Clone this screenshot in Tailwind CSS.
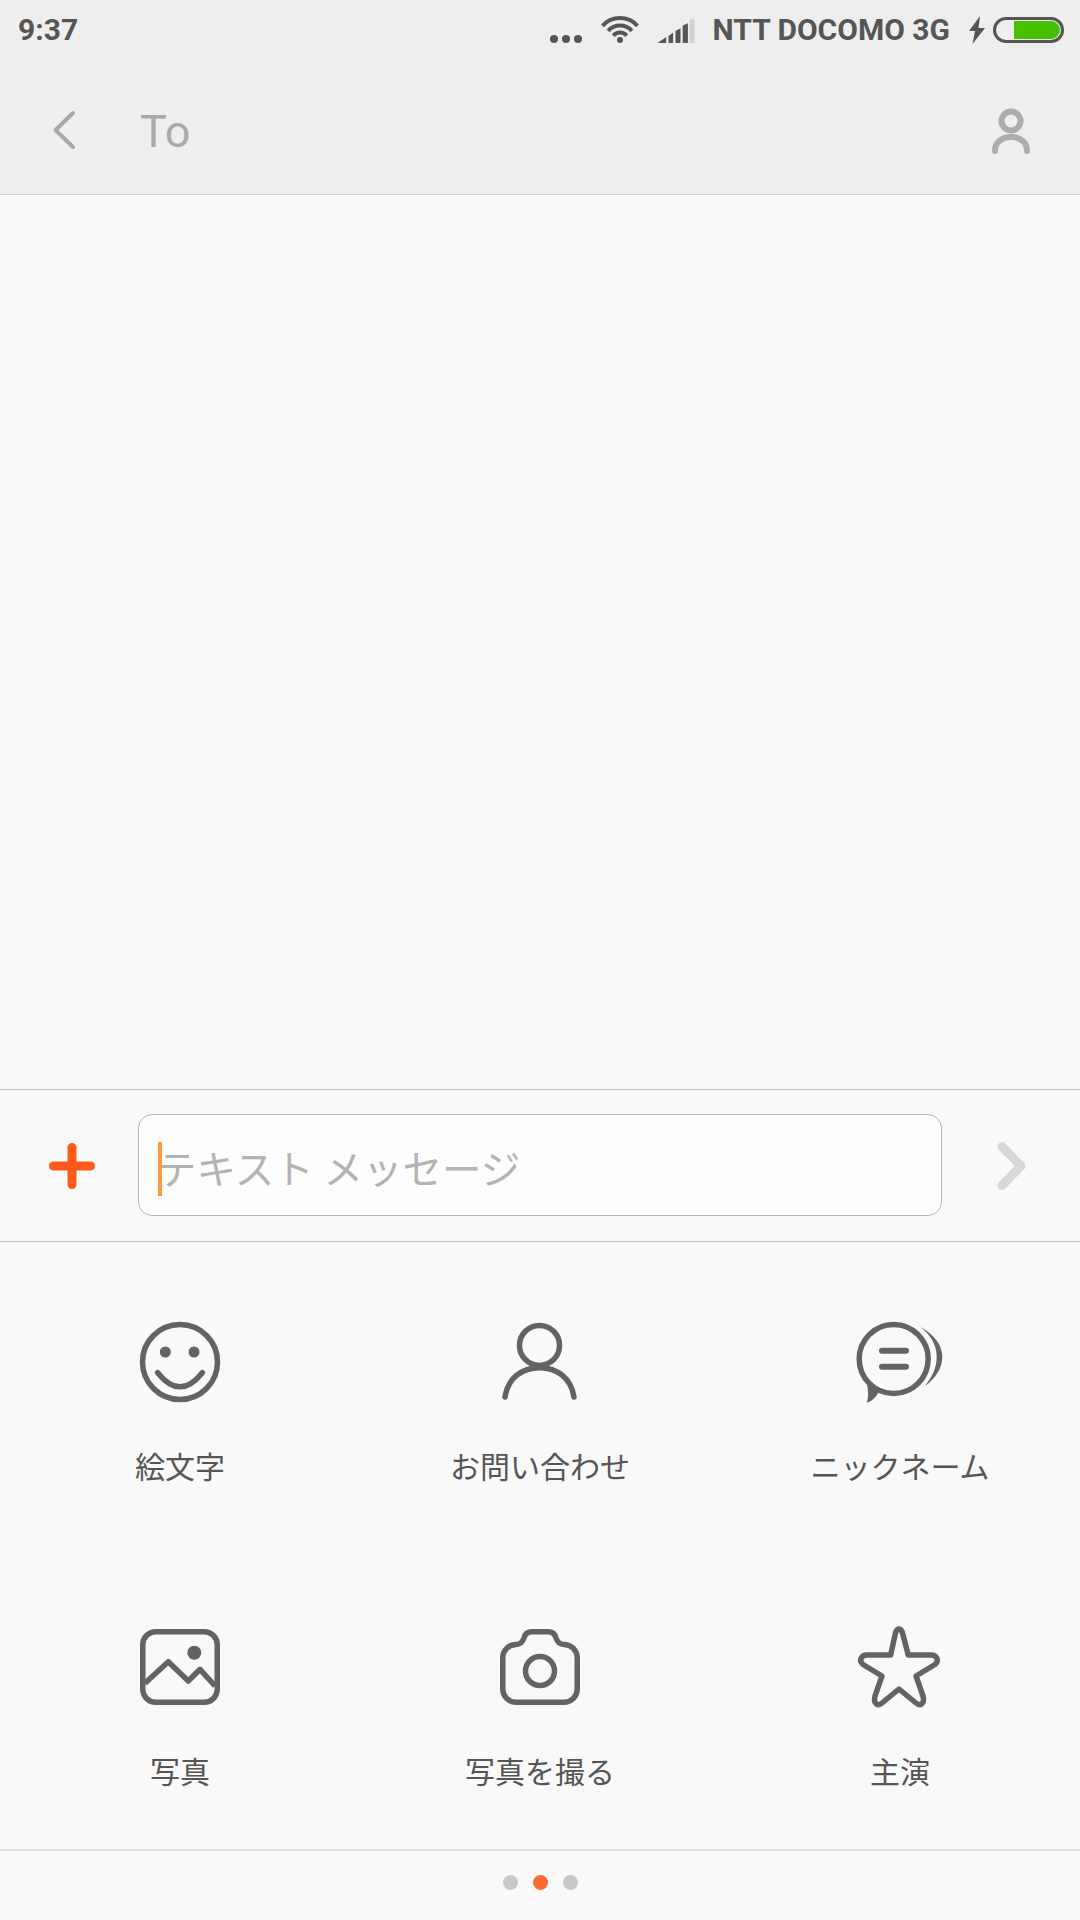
<!DOCTYPE html>
<html lang="ja">
<head>
  <meta charset="UTF-8" />
  <meta name="viewport" content="width=device-width, initial-scale=1.0" />
  <title>To</title>
  <script src="https://cdn.jsdelivr.net/npm/@tailwindcss/browser@4"></script>
</head>
<body class="bg-[#f9f9f9] font-['Roboto','Noto_Sans_CJK_JP',sans-serif]">
  <div class="flex flex-col w-[1080px] h-[1920px] overflow-hidden">
    <!-- Header -->
    <div class="bg-[#eeeeee] border-b border-[#d2d2d2] h-[195px] shrink-0">
      <!-- Status bar -->
      <div class="flex items-center h-[60px] pl-[18px] pr-[16px] text-[#555555]">
        <span class="text-[30px] font-bold leading-none">9:37</span>
        <div class="flex items-center ml-auto">
          <svg class="w-[32px] h-[10px] mt-[17px]" viewBox="0 0 32 10" fill="#555555">
            <circle cx="4" cy="5" r="4" /><circle cx="16" cy="5" r="4" /><circle cx="28" cy="5" r="4" />
          </svg>
          <svg class="w-[40px] h-[30px] ml-[18px]" viewBox="0 0 40 30" fill="none" stroke="#555555" stroke-width="4">
            <path d="M2.5 10.9A23.5 23.5 0 0 1 37.5 10.9" />
            <path d="M8.1 15.9A16 16 0 0 1 31.9 15.9" />
            <path d="M13.3 20.6A9 9 0 0 1 26.7 20.6" />
            <circle cx="20" cy="25" r="3" fill="#555555" stroke="none" />
          </svg>
          <svg class="w-[38px] h-[25px] ml-[17px] mt-[1px]" viewBox="0 0 37 25" fill="#555555">
            <path d="M0 25L8.7 19V25Z" />
            <path d="M11 18L15.6 14.7V25H11Z" />
            <path d="M18 13L23 10.3V25H18Z" />
            <path d="M25.2 7.5L30.4 5.3V25H25.2Z" />
            <path d="M32 2L37 .3V25H32Z" fill="#d2d2d2" />
          </svg>
          <span class="ml-[18px] text-[30px] font-bold leading-none whitespace-nowrap">NTT DOCOMO 3G</span>
          <svg class="w-[16px] h-[28px] ml-[19px]" viewBox="0 0 16 28" fill="#555555">
            <path d="M11 0L0 15H6L3.5 28L16 12H9.5Z" />
          </svg>
          <div class="flex justify-end w-[71px] h-[26px] ml-[8px] p-[1px] border-[3px] border-[#555555] rounded-full">
            <div class="w-[46px] h-[18px] bg-[#46c000] rounded-r-full"></div>
          </div>
        </div>
      </div>
      <!-- Nav -->
      <div class="flex items-center h-[134px] pt-[6px] pl-[51px] pr-[50px]">
        <svg class="w-[26px] h-[42px]" viewBox="0 0 26 42" fill="none" stroke="#a9a9a9" stroke-width="4" stroke-linecap="round" stroke-linejoin="round">
          <path d="M22 4L4.5 21L22 38" />
        </svg>
        <span class="ml-[63px] mt-[3px] text-[45px] leading-none text-[#a9a9a9]">To</span>
        <svg class="w-[38px] h-[48px] ml-auto mt-[2px]" viewBox="0 0 38 48" fill="none" stroke="#acacac" stroke-width="6" stroke-linecap="round">
          <circle cx="19" cy="14" r="9.5" />
          <path d="M3 44C3 35 10 30 19 30S35 35 35 44" />
        </svg>
      </div>
    </div>

    <!-- Messages -->
    <div class="flex-1"></div>

    <!-- Composer -->
    <div class="flex items-center h-[153px] shrink-0 border-y border-[#c6c6c6] pl-[49px] pr-[53px]">
      <svg class="w-[46px] h-[46px] shrink-0" viewBox="0 0 46 46" stroke="#ff5a1a" stroke-width="9" stroke-linecap="round">
        <path d="M23 4.5V41.5M4.5 23H41.5" />
      </svg>
      <div class="relative flex items-center w-[804px] h-[102px] mb-[1px] ml-[43px] pl-[18px] pt-[11px] bg-[#fdfdfd] border border-[#b6b6b6] rounded-[14px]">
        <div class="absolute left-[19px] top-[27px] w-[4px] h-[54px] bg-[#ff9a3c]"></div>
        <span class="text-[39.5px] leading-none text-[#b3b3b3] whitespace-nowrap">テキスト メッセージ</span>
      </div>
      <svg class="w-[30px] h-[48px] ml-auto" viewBox="0 0 30 48" fill="none" stroke="#d8d8d8" stroke-width="9" stroke-linecap="round" stroke-linejoin="round">
        <path d="M5 4.5L24 24L5 43.5" />
      </svg>
    </div>

    <!-- Attachments -->
    <div class="grid grid-cols-3 gap-y-[129px] content-start h-[607px] shrink-0 pt-[70px]">
      <div class="flex flex-col items-center">
        <svg class="w-[100px] h-[100px]" viewBox="0 0 100 100" fill="none" stroke="#636363" stroke-width="5.5" stroke-linecap="round">
          <circle cx="50" cy="50" r="37.5" />
          <circle cx="35.3" cy="40" r="5.5" fill="#636363" stroke="none" />
          <circle cx="64" cy="40" r="5.5" fill="#636363" stroke="none" />
          <path d="M27.7 60.7Q50 89 72.3 60.7" />
        </svg>
        <span class="mt-[36px] text-[30px] leading-[40px] text-[#555555]">絵文字</span>
      </div>
      <div class="flex flex-col items-center">
        <svg class="w-[100px] h-[100px]" viewBox="0 0 100 100" fill="none" stroke="#636363" stroke-width="5.5" stroke-linecap="round">
          <circle cx="49.5" cy="33.4" r="20" />
          <path d="M15 85C18 66 32 55.7 49.5 55.7S81 66 84 85" />
        </svg>
        <span class="mt-[36px] text-[30px] leading-[40px] text-[#555555]">お問い合わせ</span>
      </div>
      <div class="flex flex-col items-center">
        <svg class="w-[100px] h-[100px]" viewBox="0 0 100 100" fill="none" stroke="#636363" stroke-width="5.5" stroke-linecap="round">
          <circle cx="43.7" cy="47" r="34.5" />
          <path d="M17 72C18.5 80 18.5 86 16.7 90.7C22 89 26 86 29 79Z" fill="#636363" stroke="none" />
          <path d="M32 38.7H56M32 54.7H56" stroke-width="6" />
          <path d="M70 15C84 22 92.3 33 92.3 45C92.3 56 85 67 75 74C82 65 86.7 56 86.7 45C86.7 32 80 22 70 15Z" fill="#636363" stroke="none" />
        </svg>
        <span class="mt-[36px] text-[30px] leading-[40px] text-[#555555]">ニックネーム</span>
      </div>
      <div class="flex flex-col items-center">
        <svg class="w-[100px] h-[100px]" viewBox="0 0 100 100" fill="none" stroke="#636363" stroke-width="5.5" stroke-linejoin="round">
          <rect x="12.75" y="14.75" width="74.5" height="70.5" rx="13" />
          <circle cx="64.3" cy="35.7" r="7" fill="#636363" stroke="none" />
          <path d="M15 66.3L38.3 44.7L58.3 64L70 52.3L85 69" />
        </svg>
        <span class="mt-[36px] text-[30px] leading-[40px] text-[#555555]">写真</span>
      </div>
      <div class="flex flex-col items-center">
        <svg class="w-[100px] h-[100px]" viewBox="0 0 100 100" fill="none" stroke="#636363" stroke-width="5.5">
          <path d="M26 27.5C31 27.5 33 24 34 21C35 17 38 14.75 42 14.75H58C62 14.75 65 17 66 21C67 24 69 27.5 74 27.5A13.25 13.25 0 0 1 87.25 40.75V72A13.25 13.25 0 0 1 74 85.25H26A13.25 13.25 0 0 1 12.75 72V40.75A13.25 13.25 0 0 1 26 27.5Z" />
          <circle cx="50" cy="54" r="14.5" />
        </svg>
        <span class="mt-[36px] text-[30px] leading-[40px] text-[#555555]">写真を撮る</span>
      </div>
      <div class="flex flex-col items-center">
        <svg class="w-[100px] h-[100px]" viewBox="0 0 100 100" fill="none" stroke="#636363" stroke-width="5.5" stroke-linejoin="round">
          <path d="M40.7 38L45 18C46.5 10 51.5 10 53 18L58.3 38H81C87 38 89.5 44 85 47.5L66 59L73 79C75 87 70 89.5 66 86L49 72L32 86C28 89.5 23 87 25 79L32 59L13 47.5C8.5 44 11 38 17 38Z" />
        </svg>
        <span class="mt-[36px] text-[30px] leading-[40px] text-[#555555]">主演</span>
      </div>
    </div>

    <!-- Page dots -->
    <div class="flex items-center justify-center gap-[15px] h-[71px] shrink-0 pb-[6px] border-t-2 border-[#dedede]">
      <div class="w-[15px] h-[15px] rounded-full bg-[#c8c8c8]"></div>
      <div class="w-[15px] h-[15px] rounded-full bg-[#ff6b2c]"></div>
      <div class="w-[15px] h-[15px] rounded-full bg-[#c8c8c8]"></div>
    </div>
  </div>
</body>
</html>
